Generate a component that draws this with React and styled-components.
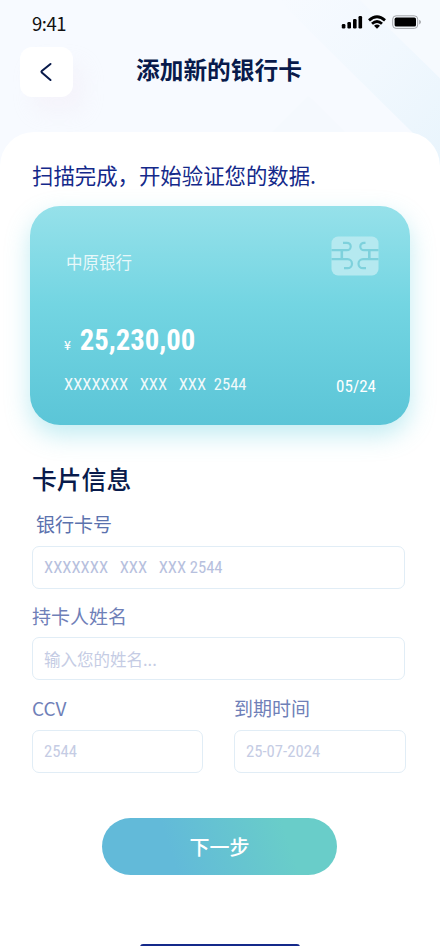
import React from "react";
import styled, { createGlobalStyle } from "styled-components";

const cardNumber = ["XXXXXXX", "XXX", "XXX", "2544"];

function App() {
    return (
        <>
            <GlobalStyle />
            <Screen>
                <Backdrop viewBox="0 0 440 180">
                    <defs>
                        <linearGradient id="band" x1="0" y1="0" x2="1" y2="1">
                            <stop offset="0" stopColor="#f7faff" />
                            <stop offset="0.5" stopColor="#f1f8fe" />
                            <stop offset="1" stopColor="#e8f4fc" />
                        </linearGradient>
                    </defs>
                    <path d="M278 0H360L440 78V180L412 132Z" fill="url(#band)" />
                    <path d="M360 0H440V78Z" fill="#f6fafe" />
                    <path d="M308 96L345 132H272Z" fill="#f5f9fe" />
                </Backdrop>
                <StatusBar>
                    <Time>9:41</Time>
                    <StatusIcons />
                </StatusBar>
                <Header>
                    <BackButton aria-label="返回">
                        <svg width="14" height="20" viewBox="0 0 14 20">
                            <path
                                d="M11.5 2L2.8 9Q2 9.8 2.8 10.6L11.5 18"
                                fill="none"
                                stroke="#081a4b"
                                strokeWidth="2"
                                strokeLinecap="round"
                            />
                        </svg>
                    </BackButton>
                    <Title>添加新的银行卡</Title>
                </Header>
                <Sheet>
                    <Message>扫描完成，开始验证您的数据.</Message>
                    <BankCard>
                        <CardTop>
                            <BankName>中原银行</BankName>
                            <Chip />
                        </CardTop>
                        <Balance>
                            <small>¥</small>
                            25,230,00
                        </Balance>
                        <CardBottom>
                            <NumberGroup $last={8}>
                                {cardNumber.map((part, i) => (
                                    <span key={i}>{part}</span>
                                ))}
                            </NumberGroup>
                            <Expiry>05/24</Expiry>
                        </CardBottom>
                    </BankCard>
                    <SectionTitle>卡片信息</SectionTitle>
                    <Field>
                        <Label $indent $strong>
                            银行卡号
                        </Label>
                        <InputBox $strong>
                            <NumberGroup $last={4}>
                                {cardNumber.map((part, i) => (
                                    <span key={i}>{part}</span>
                                ))}
                            </NumberGroup>
                        </InputBox>
                    </Field>
                    <Field>
                        <Label $short>持卡人姓名</Label>
                        <InputBox>输入您的姓名...</InputBox>
                    </Field>
                    <FieldRow>
                        <Field>
                            <Label>CCV</Label>
                            <InputBox $number>2544</InputBox>
                        </Field>
                        <Field>
                            <Label>到期时间</Label>
                            <InputBox $number>25-07-2024</InputBox>
                        </Field>
                    </FieldRow>
                    <NextButton>下一步</NextButton>
                    <HomeIndicator />
                </Sheet>
            </Screen>
        </>
    );
}

export default App;

function StatusIcons() {
    return (
        <svg width="80" height="16" viewBox="341 14 80 16">
            <rect x="341.8" y="24" width="3.6" height="4.5" rx="1.2" />
            <rect x="347.4" y="22" width="3.6" height="6.5" rx="1.2" />
            <rect x="353" y="19" width="3.6" height="9.5" rx="1.2" />
            <rect x="358.5" y="16" width="3.6" height="12.5" rx="1.2" />
            <g fill="none" stroke="#000" strokeWidth="2.8">
                <path d="M369 20.4Q377 13.2 385 20.4" />
                <path d="M372 23.8Q377 19.2 382 23.8" />
            </g>
            <path d="M374 25.7Q377 23.5 380 25.7L377 28.8Z" />
            <rect
                x="392.7"
                y="15.8"
                width="25"
                height="12.6"
                rx="3.4"
                fill="none"
                stroke="#a4a6aa"
            />
            <rect x="394.6" y="17.6" width="21.4" height="9" rx="1.6" />
            <path d="M419.2 19.8Q421 20.6 421 22.1T419.2 24.4Z" fill="#a4a6aa" />
        </svg>
    );
}

function Chip() {
    return (
        <svg width="48" height="40" viewBox="0 0 48 40">
            <rect x="0.5" y="0.5" width="47" height="39" rx="6.5" fill="#b5e9f0" />
            <g fill="none" stroke="#7ed1dc" strokeWidth="2.2">
                <path d="M0.5 14.2H16A3.7 3.7 0 0 0 16 6.8H12" />
                <path d="M0.5 23.2H16.5A4.4 4.4 0 0 1 16.5 32.2H13" />
                <path d="M10.8 14.2V23.2" strokeWidth="2.6" />
                <path d="M47.5 14.2H33A3.7 3.7 0 0 1 33 6.8H34.5" />
                <path d="M47.5 23.2H32A4.4 4.4 0 0 0 32 32.2H35" />
                <path d="M38.3 14.2V23.2" strokeWidth="2.6" />
            </g>
        </svg>
    );
}

const GlobalStyle = createGlobalStyle`
    * {
        box-sizing: border-box;
    }

    body {
        margin: 0;
        font-family: "Noto Sans CJK SC", sans-serif;
    }

    svg {
        display: block;
    }
`;

const Screen = styled.div`
    position: relative;
    display: flex;
    flex-direction: column;
    width: 440px;
    height: 946px;
    overflow: hidden;
    background-color: #f7faff;
`;

const Backdrop = styled.svg`
    position: absolute;
    top: 0;
    left: 0;
    width: 440px;
    height: 180px;
`;

const StatusBar = styled.div`
    position: relative;
    display: flex;
    flex: none;
    justify-content: space-between;
    height: 46px;
    padding: 14px 19px 0 32px;
`;

const Time = styled.span`
    font-size: 18.5px;
    line-height: 18px;
    letter-spacing: -0.5px;
    color: #111;
`;

const Header = styled.header`
    position: relative;
    display: flex;
    flex: none;
    align-items: flex-start;
    gap: 63px;
    height: 86px;
    padding-left: 20px;
`;

const BackButton = styled.button`
    display: flex;
    align-items: center;
    justify-content: center;
    width: 53px;
    height: 50px;
    margin-top: 1px;
    padding: 0 2px 0 0;
    border: none;
    border-radius: 12px;
    background-color: #fff;
    box-shadow: 12px 16px 20px rgba(240, 220, 230, 0.17);
`;

const Title = styled.h1`
    margin: 3px 0 0;
    font-size: 23.7px;
    font-weight: 700;
    line-height: 40px;
    color: #081a4b;
`;

const Sheet = styled.main`
    position: relative;
    display: flex;
    flex: none;
    flex-direction: column;
    height: 820px;
    padding: 28px 34px 0 32px;
    border-radius: 34px 34px 0 0;
    background-color: #fff;
`;

const Message = styled.p`
    margin: 0;
    font-size: 21.4px;
    line-height: 30px;
    color: #14298a;
`;

const BankCard = styled.section`
    flex: none;
    width: 380px;
    height: 219px;
    margin: 16px 0 0 -2px;
    padding: 30px 31px 0 34px;
    border-radius: 30px;
    background: linear-gradient(#96e1ea, #73d5e2 45%, #5bc5d7);
    box-shadow: 0 10px 24px rgba(91, 205, 220, 0.38);
    color: #fff;
`;

const CardTop = styled.div`
    display: flex;
    justify-content: space-between;
    height: 88px;
`;

const BankName = styled.span`
    padding: 14px 0 0 2px;
    font-size: 16.5px;
    line-height: 24px;
    opacity: 0.82;
`;

const Balance = styled.div`
    display: flex;
    align-items: baseline;
    gap: 9px;
    height: 43px;
    font-family: "Roboto Condensed", Roboto, sans-serif;
    font-size: 28.7px;
    font-stretch: 75%;
    font-weight: 700;
    line-height: 32px;

    small {
        font-family: "Noto Sans CJK SC", sans-serif;
        font-size: 12px;
        font-weight: 500;
        line-height: 16px;
    }
`;

const CardBottom = styled.div`
    display: flex;
    justify-content: space-between;
    padding-right: 3px;
`;

const NumberGroup = styled.div`
    display: flex;
    gap: 12px;
    font-family: "Roboto Condensed", Roboto, sans-serif;
    font-size: 16.6px;
    font-stretch: 75%;
    line-height: 36px;
    opacity: 0.9;

    span {
        margin-right: -0.4px;
    }

    span:last-child {
        margin-left: ${({ $last }) => $last - 12}px;
    }
`;

const Expiry = styled.span`
    font-family: "Roboto Condensed", Roboto, sans-serif;
    font-size: 17px;
    font-stretch: 75%;
    line-height: 38px;
`;

const SectionTitle = styled.h2`
    margin: 34px 0 0;
    font-size: 24.8px;
    font-weight: 500;
    line-height: 38px;
    color: #081a4b;
`;

const Field = styled.div`
    display: flex;
    flex-direction: column;
    flex: none;
`;

const Label = styled.label`
    height: ${({ $short }) => ($short ? 48 : 49)}px;
    padding: 14px 0 0 ${({ $indent }) => ($indent ? "4px" : "0")};
    font-size: 19px;
    line-height: 26px;
    color: ${({ $strong }) => ($strong ? "#5b72ae" : "#6f80b8")};
`;

const InputBox = styled.div`
    display: flex;
    align-items: center;
    width: 100%;
    max-width: 373px;
    height: 43px;
    padding-left: 11px;
    border: 1px solid #e1edf6;
    border-radius: 7px;
    font-family: ${({ $number }) =>
        $number
            ? '"Roboto Condensed", Roboto, sans-serif'
            : '"Noto Sans CJK SC", sans-serif'};
    font-size: ${({ $number }) => ($number ? "16.7px" : "16.5px")};
    font-stretch: 75%;
    color: ${({ $strong }) => ($strong ? "#b0badb" : "#c5cce4")};
`;

const FieldRow = styled.div`
    display: grid;
    grid-template-columns: 171px 172px;
    gap: 31px;
    margin-top: 1px;
`;

const NextButton = styled.button`
    flex: none;
    width: 235px;
    height: 57px;
    margin: 45px 0 0 70px;
    padding: 0;
    border: none;
    border-radius: 29px;
    background: linear-gradient(72deg, #62bad9 30%, #69cdc9 78%);
    font-family: inherit;
    font-size: 20px;
    font-weight: 500;
    line-height: 57px;
    color: #fff;
`;

const HomeIndicator = styled.div`
    flex: none;
    width: 160px;
    height: 6px;
    margin: 69px 0 0 108px;
    border-radius: 4px;
    background-color: #14298a;
`;
